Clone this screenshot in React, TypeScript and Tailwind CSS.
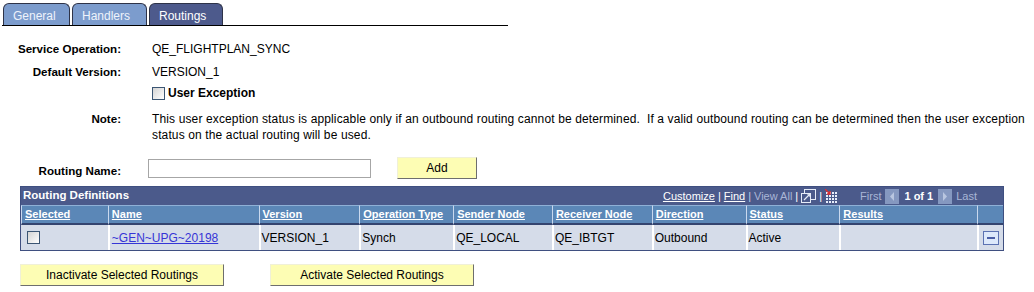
import React from 'react';

const font = { fontFamily: '"Liberation Sans", Arial, sans-serif' };

const note =
  'This user exception status is applicable only if an outbound routing cannot be determined.\u00a0 If a valid outbound routing can be determined then the user exception status on the actual routing will be used.';

const columns = [
  { label: 'Selected', w: 'w-[87px]' },
  { label: 'Name', w: 'w-[151px]' },
  { label: 'Version', w: 'w-[101px]' },
  { label: 'Operation Type', w: 'w-[94px]' },
  { label: 'Sender Node', w: 'w-[99px]' },
  { label: 'Receiver Node', w: 'w-[100px]' },
  { label: 'Direction', w: 'w-[94px]' },
  { label: 'Status', w: 'w-[94px]' },
  { label: 'Results', w: 'w-[138px]' },
  { label: '', w: 'w-[26px]' },
];

const cells = ['VERSION_1', 'Synch', 'QE_LOCAL', 'QE_IBTGT', 'Outbound', 'Active'];
const cellWidths = ['w-[101px]', 'w-[94px]', 'w-[99px]', 'w-[100px]', 'w-[94px]', 'w-[94px]'];

function Checkbox() {
  return (
    <span className="inline-block h-[13px] w-[13px] border border-[#3b5573] bg-gradient-to-br from-[#d4d4d4] to-white" />
  );
}

function YellowButton({ label, w }: { label: string; w: string }) {
  return (
    <button
      className={`${w} h-[22px] border border-t-[#f0f0d8] border-l-[#f0f0d8] border-b-[#6e6e6e] border-r-[#6e6e6e] bg-[#fdfdb4] text-[12px] text-black`}
    >
      {label}
    </button>
  );
}

function Tab({ label, active, w }: { label: string; active?: boolean; w: string }) {
  return (
    <div
      className={`${w} h-[22px] rounded-t-[6px] border border-b-0 border-[#2e3348] pl-[9px] pt-[3px] text-[12px] ${
        active ? 'bg-[#4d5a8c] text-white' : 'bg-[#7c9ccd] text-[#eef3fb]'
      }`}
    >
      {label}
    </div>
  );
}

function ZoomIcon() {
  return (
    <svg width="15" height="14" viewBox="0 0 15 14">
      <rect x="3.5" y="0.5" width="11" height="10" fill="#4b5a8b" stroke="#e6ecf8" />
      <rect x="0.5" y="4.5" width="9" height="9" fill="#4b5a8b" stroke="#e6ecf8" />
      <path d="M3 11 L9 5 M6 5 H9 V8" stroke="#e6ecf8" strokeWidth="1.2" fill="none" />
    </svg>
  );
}

function GridIcon() {
  return (
    <svg width="13" height="14" viewBox="0 0 13 14">
      {[0, 1, 2, 3].map((r) =>
        [0, 1, 2, 3].map((c) => (
          <rect key={`${r}-${c}`} x={1 + c * 3} y={3 + r * 3} width="2" height="2" fill="#e8eefc" />
        ))
      )}
      <path d="M0 0 L5 5 M2 5 H5 V2" stroke="#e03030" strokeWidth="1.3" fill="none" />
    </svg>
  );
}

function ArrowBox({ dir }: { dir: 'left' | 'right' }) {
  return (
    <svg width="14" height="15" viewBox="0 0 14 15">
      <rect x="0" y="0" width="14" height="15" fill="#8598c0" />
      {dir === 'left' ? (
        <path d="M9 3 L5 7.5 L9 12 Z" fill="#b9c6e0" />
      ) : (
        <path d="M5 3 L9 7.5 L5 12 Z" fill="#b9c6e0" />
      )}
    </svg>
  );
}

export default function App() {
  return (
    <div className="h-[292px] w-[1034px] overflow-hidden bg-white text-[12px] text-black" style={font}>
      {/* tabs */}
      <div className="ml-[2px] mt-[3px] flex w-[506px] gap-[2px] border-b border-black pl-[1px]">
        <Tab label="General" w="w-[67px]" />
        <Tab label="Handlers" w="w-[75px]" />
        <Tab label="Routings" w="w-[74px]" active />
      </div>

      {/* form */}
      <div className="mt-[14px] flex flex-col">
        <div className="flex h-[18px] items-center">
          <div className="w-[121px] text-right text-[11.6px] font-bold">Service Operation:</div>
          <div className="ml-[31px]">QE_FLIGHTPLAN_SYNC</div>
        </div>
        <div className="mt-[5px] flex h-[18px] items-center">
          <div className="w-[121px] text-right text-[11.6px] font-bold">Default Version:</div>
          <div className="ml-[31px]">VERSION_1</div>
        </div>
        <div className="mt-[3px] flex h-[18px] items-center pl-[152px]">
          <Checkbox />
          <span className="ml-[3px] font-bold">User Exception</span>
        </div>
        <div className="mt-[9px] flex leading-[16px]">
          <div className="w-[121px] text-right text-[11.6px] font-bold">Note:</div>
          <p className="ml-[31px] w-[880px] tracking-[0.13px]">{note}</p>
        </div>
        <div className="mt-[14px] flex h-[22px] items-center">
          <div className="w-[121px] pt-[6px] text-right text-[11.6px] font-bold">Routing Name:</div>
          <input className="ml-[27px] h-[19px] w-[223px] border border-[#a6a6a6] bg-white outline-none" />
          <div className="ml-[26px]">
            <YellowButton label="Add" w="w-[80px]" />
          </div>
        </div>
      </div>

      {/* grid */}
      <div className="ml-[20px] mt-[7px] w-[984px] border border-[#3f4f80]">
        <div className="flex h-[18px] items-center justify-between bg-[#4b5a8b] pl-[2px] pr-[26px] text-white">
          <span className="text-[11.5px] font-bold">Routing Definitions</span>
          <div className="flex items-center text-[11px]">
            <span className="underline">Customize</span>
            <span className="mx-[3px]">|</span>
            <span className="underline">Find</span>
            <span className="mx-[3px] text-[#c0cbe2]">|</span>
            <span className="text-[#a9b6d6]">View All</span>
            <span className="mx-[3px]">|</span>
            <ZoomIcon />
            <span className="mx-[3px]">|</span>
            <GridIcon />
            <span className="ml-[22px] text-[#a9b6d6]">First</span>
            <span className="ml-[4px] flex"><ArrowBox dir="left" /></span>
            <span className="mx-[5px] font-bold">1 of 1</span>
            <ArrowBox dir="right" />
            <span className="ml-[4px] text-[#a9b6d6]">Last</span>
          </div>
        </div>
        <div className="flex h-[20px] bg-[#5b87b7]">
          {columns.map((c, i) => (
            <div
              key={i}
              className={`${c.w} border-b-2 border-l border-t border-b-[#34446f] border-l-[#c9d8ee] border-t-[#8fb0d6] pl-[3px] text-[11px] font-bold leading-[16px] text-white underline`}
            >
              {c.label}
            </div>
          ))}
        </div>
        <div className="flex h-[25px] bg-[#d5dce9]">
          <div className="flex w-[87px] items-center pl-[6px]">
            <Checkbox />
          </div>
          <div className="flex w-[151px] items-center border-l-2 border-white pl-[2px]">
            <span className="text-[#3535d6] underline">~GEN~UPG~20198</span>
          </div>
          {cells.map((t, i) => (
            <div key={t} className={`flex ${cellWidths[i]} items-center border-l-2 border-white pl-[1px]`}>
              {t}
            </div>
          ))}
          <div className="w-[138px] border-l-2 border-white" />
          <div className="flex w-[26px] items-center justify-center border-l-2 border-white">
            <span className="flex h-[14px] w-[16px] items-center justify-center border border-[#5b72b2] bg-[#dde9fb]">
              <span className="h-[2px] w-[8px] bg-[#4b5fa6]" />
            </span>
          </div>
        </div>
      </div>

      {/* buttons */}
      <div className="ml-[20px] mt-[13px] flex gap-[46px]">
        <YellowButton label="Inactivate Selected Routings" w="w-[204px]" />
        <YellowButton label="Activate Selected Routings" w="w-[204px]" />
      </div>
    </div>
  );
}
